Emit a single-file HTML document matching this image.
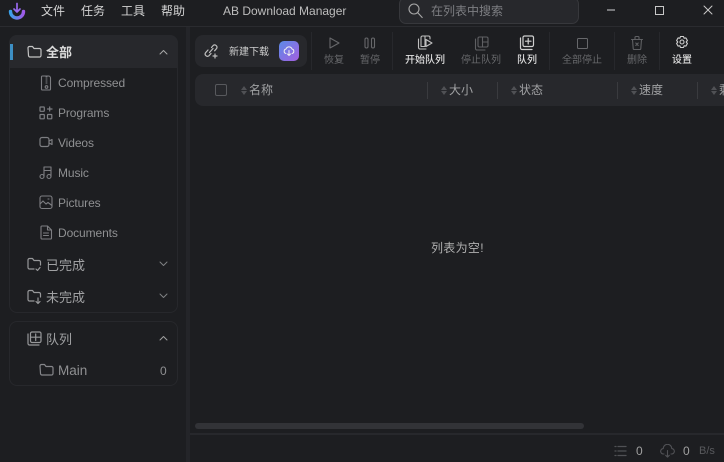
<!DOCTYPE html>
<html><head><meta charset="utf-8"><style>
html,body{margin:0;padding:0;width:724px;height:462px;overflow:hidden;background:#1d1e21;font-family:"Liberation Sans","Noto Sans CJK SC",sans-serif;color:#bbb}
.a{position:absolute;white-space:nowrap}
svg{position:absolute;fill:none;stroke-linecap:round;stroke-linejoin:round}
.m{font-size:12px;color:#d4d4d4;top:3px;line-height:16px}
.r{background:#27282c}
.t{font-size:10px;line-height:12px;text-align:center;top:55px;width:50px}
.dim{color:#67686b}.br{color:#dedede;font-weight:500}
.sep{width:1px;background:#27282c;top:32px;height:38px}
.s{font-size:12px;color:#8f9092;line-height:16px;left:58px;letter-spacing:-.1px}
.f{font-size:13px;color:#a0a1a3;line-height:18px;left:46px}
.h{font-size:12px;color:#a0a1a3;top:82px;line-height:16px}
.l{width:1px;height:17px;background:#3a3b3f;top:82px}
.ar{width:0;height:0;border-left:3.5px solid transparent;border-right:3.5px solid transparent}
.u{border-bottom:4px solid #505155;top:86px}.d{border-top:4px solid #505155;top:91px}
</style></head><body>
<svg style="left:8px;top:2px" width="18" height="18" viewBox="0 0 18 18"><defs><linearGradient id="g" x1="0" y1="0" x2="1" y2="0"><stop offset="0" stop-color="#3aa0e8"/><stop offset="1" stop-color="#a05ae8"/></linearGradient></defs><path d="M2.500 9.500a6.500 6.500 0 0 0 13 0" stroke="url(#g)" stroke-width="3.400"/><path d="M9 1.500v8M6 7l3 3 3-3" stroke="#9a6af0" stroke-width="1.700"/></svg>
<div class="a m" style="left:41px">文件</div><div class="a m" style="left:81px">任务</div><div class="a m" style="left:121px">工具</div><div class="a m" style="left:161px">帮助</div>
<div class="a" style="left:223px;top:3px;font-size:12px;line-height:16px;color:#bdbdbd">AB Download Manager</div>
<div class="a" style="left:399px;top:-3px;width:178px;height:25px;background:#27282c;border:1px solid #37383c;border-radius:7px"></div>
<svg style="left:407px;top:2px" width="17" height="17" viewBox="0 0 17 17" stroke="#a8a8a8" stroke-width="1.100"><circle cx="7" cy="7" r="5"/><path d="M11 11l4.200 4.500"/></svg>
<div class="a" style="left:431px;top:3px;font-size:12px;line-height:16px;color:#7d7e82">在列表中搜索</div>
<div class="a" style="left:607px;top:9px;width:8px;height:2px;background:#77787b"></div>
<div class="a" style="left:655px;top:6px;width:7px;height:7px;border:1px solid #c8c8c8"></div>
<svg style="left:702px;top:4px" width="12" height="12" viewBox="0 0 12 12" stroke="#c8c8c8" stroke-width="1"><path d="M2 2l8 8M10 2l-8 8"/></svg>
<div class="a" style="left:0;top:26px;width:724px;height:1px;background:#2a2b2f"></div>
<div class="a" style="left:186px;top:27px;width:4px;height:435px;background:#242529"></div>

<div class="a" style="left:9px;top:35px;width:167px;height:276px;border:1px solid #27282c;border-radius:8px"></div>
<div class="a r" style="left:9px;top:35px;width:169px;height:33px;border-radius:8px 8px 0 0"></div>
<div class="a" style="left:10px;top:44px;width:3px;height:16px;background:#3d8fc4"></div>
<svg style="left:27px;top:45px" width="15" height="14" viewBox="0 0 15 14" stroke="#c4c4c4" stroke-width="1.200"><path d="M1 3a1.500 1.500 0 0 1 1.500-1.500h3l1.500 2h5.500a1.500 1.500 0 0 1 1.500 1.500v5.500a1.500 1.500 0 0 1-1.500 1.500h-9.500a1.500 1.500 0 0 1-1.500-1.500z"/></svg>
<div class="a f" style="top:44px;color:#dcdcdc;font-weight:700">全部</div>
<svg style="left:159px;top:49px" width="9" height="6" viewBox="0 0 9 6" stroke="#a8a8a8" stroke-width="1"><path d="M1 5l3.500-3.500 3.500 3.500"/></svg>

<svg style="left:39px;top:75px" width="15" height="16" viewBox="0 0 15 16" stroke="#7d7e82" stroke-width="1.100"><path d="M2.500 2a1 1 0 0 1 1-1h6a2 2 0 0 1 2 2v11a1 1 0 0 1-1 1h-7a1 1 0 0 1-1-1zM7 2h1M7 4h1M7 6h1M7 8h1"/><circle cx="7.500" cy="12" r="1.300"/></svg>
<div class="a s" style="top:75px">Compressed</div>
<svg style="left:39px;top:106px" width="14" height="14" viewBox="0 0 14 14" stroke="#7d7e82" stroke-width="1.200"><rect x="1" y="1" width="4.300" height="4.300" rx=".5"/><rect x="1" y="8.500" width="4.300" height="4.300" rx=".5"/><rect x="8.500" y="8.500" width="4.300" height="4.300" rx=".5"/><path d="M8.500 3h4.500M10.700 1v4"/></svg>
<div class="a s" style="top:105px">Programs</div>
<svg style="left:39px;top:136px" width="15" height="13" viewBox="0 0 15 13" stroke="#7d7e82" stroke-width="1.200"><rect x="1" y="1.500" width="9" height="9" rx="2"/><path d="M10 5l3-1.500v5l-3-1.500"/></svg>
<div class="a s" style="top:135px">Videos</div>
<svg style="left:39px;top:165px" width="14" height="15" viewBox="0 0 14 15" stroke="#7d7e82" stroke-width="1.100"><circle cx="3" cy="11.500" r="2"/><circle cx="10" cy="11.500" r="2"/><path d="M5 11.500v-9.500h7v9.500M5 5.500h7"/></svg>
<div class="a s" style="top:165px">Music</div>
<svg style="left:39px;top:195px" width="14" height="15" viewBox="0 0 14 15" stroke="#7d7e82" stroke-width="1.100"><rect x="1" y="1" width="12" height="12.500" rx="2"/><path d="M1 9l3-3 3 3 2-1.500 4 3M9 4h1"/></svg>
<div class="a s" style="top:195px">Pictures</div>
<svg style="left:40px;top:225px" width="13" height="15" viewBox="0 0 13 15" stroke="#7d7e82" stroke-width="1.100"><path d="M1 2a1 1 0 0 1 1-1h5.500l4 4v8a1 1 0 0 1-1 1h-8.500a1 1 0 0 1-1-1zM7.500 1v4h4M3.500 8h5M3.500 10.500h5"/></svg>
<div class="a s" style="top:225px">Documents</div>

<svg style="left:27px;top:257px" width="15" height="15" viewBox="0 0 15 15" stroke="#97989a" stroke-width="1.200"><path d="M7 12h-4.500a1.500 1.500 0 0 1-1.500-1.500v-7.500a1.500 1.500 0 0 1 1.500-1.500h3l1.500 2h5a1.500 1.500 0 0 1 1.500 1.500v3M9 12l1.500 1.500 2.500-3"/></svg>
<div class="a f" style="top:257px">已完成</div>
<svg style="left:159px;top:261px" width="9" height="6" viewBox="0 0 9 6" stroke="#7f8083" stroke-width="1"><path d="M1 1l3.500 3.500 3.500-3.500"/></svg>
<svg style="left:27px;top:289px" width="15" height="16" viewBox="0 0 15 16" stroke="#97989a" stroke-width="1.200"><path d="M7 12h-4.500a1.500 1.500 0 0 1-1.500-1.500v-7.500a1.500 1.500 0 0 1 1.500-1.500h3l1.500 2h5a1.500 1.500 0 0 1 1.500 1.500v3M11 9v5.500M9 12.500l2 2 2-2"/></svg>
<div class="a f" style="top:289px">未完成</div>
<svg style="left:159px;top:293px" width="9" height="6" viewBox="0 0 9 6" stroke="#7f8083" stroke-width="1"><path d="M1 1l3.500 3.500 3.500-3.500"/></svg>

<div class="a" style="left:9px;top:321px;width:167px;height:63px;border:1px solid #27282c;border-radius:8px"></div>
<svg style="left:27px;top:331px" width="15" height="15" viewBox="0 0 15 15" stroke="#97989a" stroke-width="1.200"><path d="M1 3v9.500a1.500 1.500 0 0 0 1.500 1.500h9.500"/><rect x="3.500" y="1" width="10.500" height="10.500" rx="1.500"/><path d="M8.700 3v6.500M3.500 6.200h10.500"/></svg>
<div class="a f" style="top:331px">队列</div>
<svg style="left:159px;top:335px" width="9" height="6" viewBox="0 0 9 6" stroke="#a0a0a0" stroke-width="1"><path d="M1 5l3.500-3.500 3.500 3.500"/></svg>
<svg style="left:39px;top:363px" width="15" height="14" viewBox="0 0 15 14" stroke="#85868a" stroke-width="1.200"><path d="M1 3a1.500 1.500 0 0 1 1.500-1.500h3l1.500 2h5.500a1.500 1.500 0 0 1 1.500 1.500v5.500a1.500 1.500 0 0 1-1.500 1.500h-9.500a1.500 1.500 0 0 1-1.500-1.500z"/></svg>
<div class="a s" style="top:363px;font-size:13.500px;line-height:16px;letter-spacing:0">Main</div>
<div class="a s" style="left:160px;top:363px;font-size:12px">0</div>

<div class="a r" style="left:195px;top:35px;width:112px;height:32px;border-radius:8px"></div>
<svg style="left:203px;top:43px" width="16" height="16" viewBox="0 0 16 16" stroke="#bdbdbd" stroke-width="1.200"><path d="M6.500 9.500l3.500-4M5 7l-2.500 2.800a2.300 2.300 0 0 0 3.400 3l2.100-2.300M8.500 4.500l1.700-2a2.300 2.300 0 0 1 3.400 3l-2 2.300M12 11v4M10 13h4"/></svg>
<div class="a" style="left:229px;top:46px;font-size:10px;line-height:13px;color:#cfcfcf">新建下载</div>
<div class="a" style="left:279px;top:41px;width:20px;height:20px;border-radius:5px;background:linear-gradient(135deg,#5b8be8,#a45fe0)"></div>
<svg style="left:283px;top:45px" width="12" height="12" viewBox="0 0 12 12" stroke="#f0f0f0" stroke-width="1"><path d="M3 8.500a2.300 2.300 0 0 1 0-4.500a3.200 3.200 0 0 1 6 0a2.300 2.300 0 0 1 0 4.500M6 5.500v5M4.500 9l1.500 1.500 1.500-1.500"/></svg>

<div class="a sep" style="left:311px"></div><div class="a sep" style="left:392px"></div><div class="a sep" style="left:549px"></div><div class="a sep" style="left:614px"></div><div class="a sep" style="left:659px"></div>

<svg style="left:328px;top:36px" width="13" height="14" viewBox="0 0 13 14" stroke="#67686b" stroke-width="1.100"><path d="M2 2v10l9-5z"/></svg>
<div class="a t dim" style="left:309px">恢复</div>
<svg style="left:363px;top:36px" width="14" height="14" viewBox="0 0 14 14" stroke="#67686b" stroke-width="1.100"><rect x="2" y="2" width="3" height="10" rx="1.500"/><rect x="8.500" y="2" width="3" height="10" rx="1.500"/></svg>
<div class="a t dim" style="left:345px">暂停</div>
<svg style="left:417px;top:35px" width="16" height="16" viewBox="0 0 16 16" stroke="#c0c0c0" stroke-width="1.100"><path d="M1.500 4v8.500a1.500 1.500 0 0 0 1.500 1.500h6"/><path d="M4 11.500v-9a1.500 1.500 0 0 1 1.500-1.500h6a1.500 1.500 0 0 1 1.500 1.500v1.500M4 11.500h4M8 1v10.500M9 4.500l6 3.500-6 3.500z"/></svg>
<div class="a t br" style="left:400px">开始队列</div>
<svg style="left:474px;top:36px" width="16" height="15" viewBox="0 0 16 15" stroke="#5f6063" stroke-width="1.100"><path d="M1.500 3v9.500a1.500 1.500 0 0 0 1.500 1.500h8"/><rect x="4" y="1" width="10" height="10" rx="1.500"/><path d="M8.500 1v10M8.500 6h5.500"/></svg>
<div class="a t dim" style="left:456px">停止队列</div>
<svg style="left:519px;top:35px" width="16" height="16" viewBox="0 0 16 16" stroke="#d0d0d0" stroke-width="1.200"><path d="M1.500 3v10a1.500 1.500 0 0 0 1.500 1.500h10"/><rect x="4" y="1" width="10.500" height="10.500" rx="1.500"/><path d="M9.200 3.500v5.500M6.500 6.200h5.500"/></svg>
<div class="a t br" style="left:502px">队列</div>
<div class="a" style="left:577px;top:38px;width:9px;height:9px;border:1.100px solid #67686b;border-radius:1.500px"></div>
<div class="a t dim" style="left:557px">全部停止</div>
<svg style="left:630px;top:35px" width="14" height="16" viewBox="0 0 14 16" stroke="#5f6063" stroke-width="1.100"><path d="M1.500 4.500h11M5 4.500v-2a1 1 0 0 1 1-1h2a1 1 0 0 1 1 1v2M2.500 4.500l.7 9a1 1 0 0 0 1 1h5.600a1 1 0 0 0 1-1l.7-9M5.800 8l2.400 2.500M8.200 8l-2.400 2.500"/></svg>
<div class="a t dim" style="left:612px">删除</div>
<svg style="left:674px;top:35px" width="16" height="16" viewBox="0 0 16 16" stroke="#d0d0d0" stroke-width="1.100"><path d="M6.500 1.500h3l.6 1.700 1.800-.3 1.500 2.600-1.200 1.500 1.200 1.500-1.500 2.600-1.800-.3-.6 1.700h-3l-.6-1.700-1.800.3-1.500-2.600 1.200-1.500-1.200-1.500 1.500-2.600 1.800.3z"/><circle cx="8" cy="7" r="2"/></svg>
<div class="a t br" style="left:657px">设置</div>

<div class="a r" style="left:195px;top:74px;width:529px;height:32px;border-radius:8px 0 0 8px"></div>
<div class="a" style="left:215px;top:84px;width:10px;height:10px;border:1px solid #58595d;border-radius:2px"></div>
<div class="a ar u" style="left:241px"></div><div class="a ar d" style="left:241px"></div><div class="a h" style="left:249px">名称</div>
<div class="a l" style="left:427px"></div>
<div class="a ar u" style="left:441px"></div><div class="a ar d" style="left:441px"></div><div class="a h" style="left:449px">大小</div>
<div class="a l" style="left:497px"></div>
<div class="a ar u" style="left:511px"></div><div class="a ar d" style="left:511px"></div><div class="a h" style="left:519px">状态</div>
<div class="a l" style="left:617px"></div>
<div class="a ar u" style="left:631px"></div><div class="a ar d" style="left:631px"></div><div class="a h" style="left:639px">速度</div>
<div class="a l" style="left:697px"></div>
<div class="a ar u" style="left:711px"></div><div class="a ar d" style="left:711px"></div><div class="a h" style="left:719px">剩余</div>

<div class="a" style="left:431px;top:240px;font-size:12px;line-height:16px;color:#b0b0b0;letter-spacing:.3px">列表为空!</div>
<div class="a" style="left:195px;top:423px;width:389px;height:6px;border-radius:3px;background:#323337"></div>
<div class="a" style="left:190px;top:433px;width:534px;height:2px;background:#27282c"></div>
<svg style="left:614px;top:445px" width="13" height="12" viewBox="0 0 13 12" stroke="#505155" stroke-width="1.300"><path d="M1 1.500h1M4 1.500h8M1 6h1M4 6h8M1 10.500h1M4 10.500h8"/></svg>
<div class="a" style="left:636px;top:444px;font-size:12px;line-height:14px;color:#a0a0a0">0</div>
<svg style="left:660px;top:444px" width="15" height="14" viewBox="0 0 15 14" stroke="#505155" stroke-width="1.100"><path d="M4 10h-.5a2.700 2.700 0 0 1-.3-5.400a4.300 4.300 0 0 1 8.600 0a2.700 2.700 0 0 1-.3 5.400h-.5M7.500 6.500v6.500M5.700 11.300l1.800 1.800 1.800-1.800"/></svg>
<div class="a" style="left:683px;top:444px;font-size:12px;line-height:14px;color:#a0a0a0">0</div>
<div class="a" style="left:699px;top:444px;font-size:11px;line-height:14px;color:#58595d">B/s</div>
</body></html>
